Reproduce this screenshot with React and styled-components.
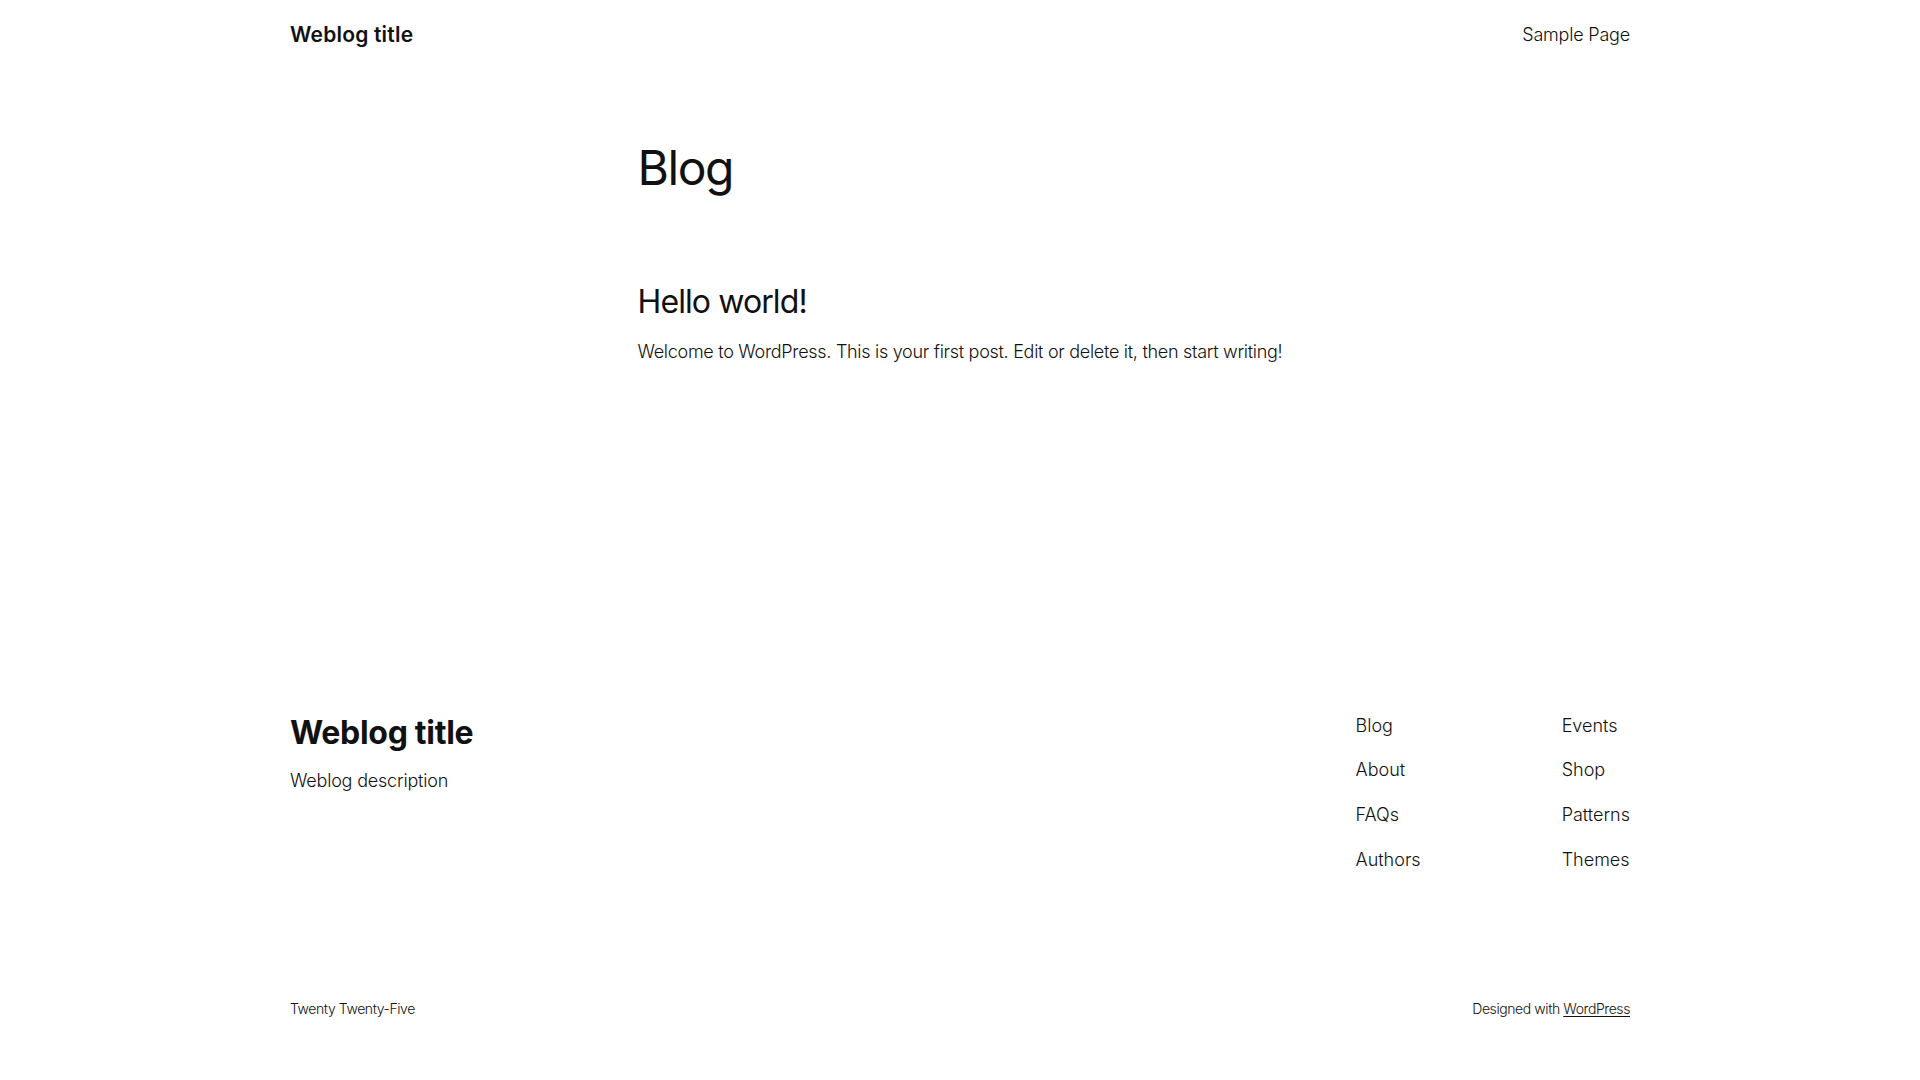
import React from "react";
import styled, { createGlobalStyle } from "styled-components";

const GlobalStyle = createGlobalStyle`
  html, body {
    margin: 0;
    padding: 0;
    background: #ffffff;
  }
  body {
    font-family: Inter, "Noto Sans", "Liberation Sans", sans-serif;
    font-weight: 300;
    color: #111111;
    -webkit-font-smoothing: antialiased;
  }
  a {
    color: inherit;
  }
`;

const Wide = styled.div`
  max-width: 1340px;
  margin: 0 auto;
`;

const Header = styled(Wide).attrs({ as: "header" })`
  display: flex;
  align-items: center;
  justify-content: space-between;
  padding: 20px 0;
`;

const SiteTitle = styled.a`
  font-size: ${(p) => (p.$big ? "32px" : "21px")};
  font-weight: ${(p) => (p.$big ? 700 : 600)};
  line-height: 1.4;
  letter-spacing: ${(p) => (p.$big ? "-0.3px" : "0.2px")};
  text-decoration: none;
`;

const NavLink = styled.a`
  font-size: 18px;
  line-height: 1.4;
  text-decoration: none;
  letter-spacing: ${(p) => (p.$tight ? "-0.2px" : "0")};
`;

const Main = styled.main`
  width: 645px;
  margin: 72px auto 0;
`;

const PageTitle = styled.h1`
  margin: 0;
  font-size: 48px;
  font-weight: 400;
  line-height: 1.125;
  letter-spacing: -1.4px;
`;

const Post = styled.article`
  margin-top: 89px;
  display: flex;
  flex-direction: column;
  gap: 19px;
`;

const PostTitle = styled.h2`
  margin: 0;
  font-size: 32px;
  font-weight: 400;
  line-height: 1.125;
  letter-spacing: -0.9px;
`;

const Excerpt = styled.p`
  margin: 0;
  font-size: 18px;
  line-height: 1.4;
  letter-spacing: -0.29px;
  white-space: nowrap;
`;

const Footer = styled(Wide).attrs({ as: "footer" })`
  margin-top: 346px;
`;

const FooterTop = styled.div`
  display: flex;
  justify-content: space-between;
  align-items: flex-start;
`;

const Brand = styled.div`
  display: flex;
  flex-direction: column;
  gap: 13px;
`;

const Tagline = styled.p`
  margin: 0;
  font-size: 18px;
  line-height: 1.4;
  letter-spacing: -0.2px;
`;

const NavColumns = styled.div`
  display: flex;
  gap: 141px;
  padding-top: 2px;
`;

const NavColumn = styled.nav`
  display: flex;
  flex-direction: column;
  gap: 19.5px;
`;

const FooterBottom = styled.div`
  display: flex;
  justify-content: space-between;
  align-items: center;
  margin-top: 127px;
  padding-bottom: 60px;
  font-size: 14px;
  line-height: 1.4;
  letter-spacing: -0.42px;
`;

const Credit = styled.a`
  text-decoration: underline;
  text-underline-offset: 2px;
  text-decoration-thickness: 1px;
`;

const columns = [
  ["Blog", "About", "FAQs", "Authors"],
  ["Events", "Shop", "Patterns", "Themes"],
];

export default function App() {
  return (
    <>
      <GlobalStyle />
      <Header>
        <SiteTitle href="#">Weblog title</SiteTitle>
        <NavLink $tight href="#">Sample Page</NavLink>
      </Header>

      <Main>
        <PageTitle>Blog</PageTitle>
        <Post>
          <PostTitle>Hello world!</PostTitle>
          <Excerpt>
            Welcome to WordPress. This is your first post. Edit or delete it, then start writing!
          </Excerpt>
        </Post>
      </Main>

      <Footer>
        <FooterTop>
          <Brand>
            <SiteTitle $big href="#">Weblog title</SiteTitle>
            <Tagline>Weblog description</Tagline>
          </Brand>
          <NavColumns>
            {columns.map((col, i) => (
              <NavColumn key={i}>
                {col.map((item) => (
                  <NavLink key={item} href="#">{item}</NavLink>
                ))}
              </NavColumn>
            ))}
          </NavColumns>
        </FooterTop>
        <FooterBottom>
          <span>Twenty Twenty-Five</span>
          <span>
            Designed with <Credit href="#">WordPress</Credit>
          </span>
        </FooterBottom>
      </Footer>
    </>
  );
}
